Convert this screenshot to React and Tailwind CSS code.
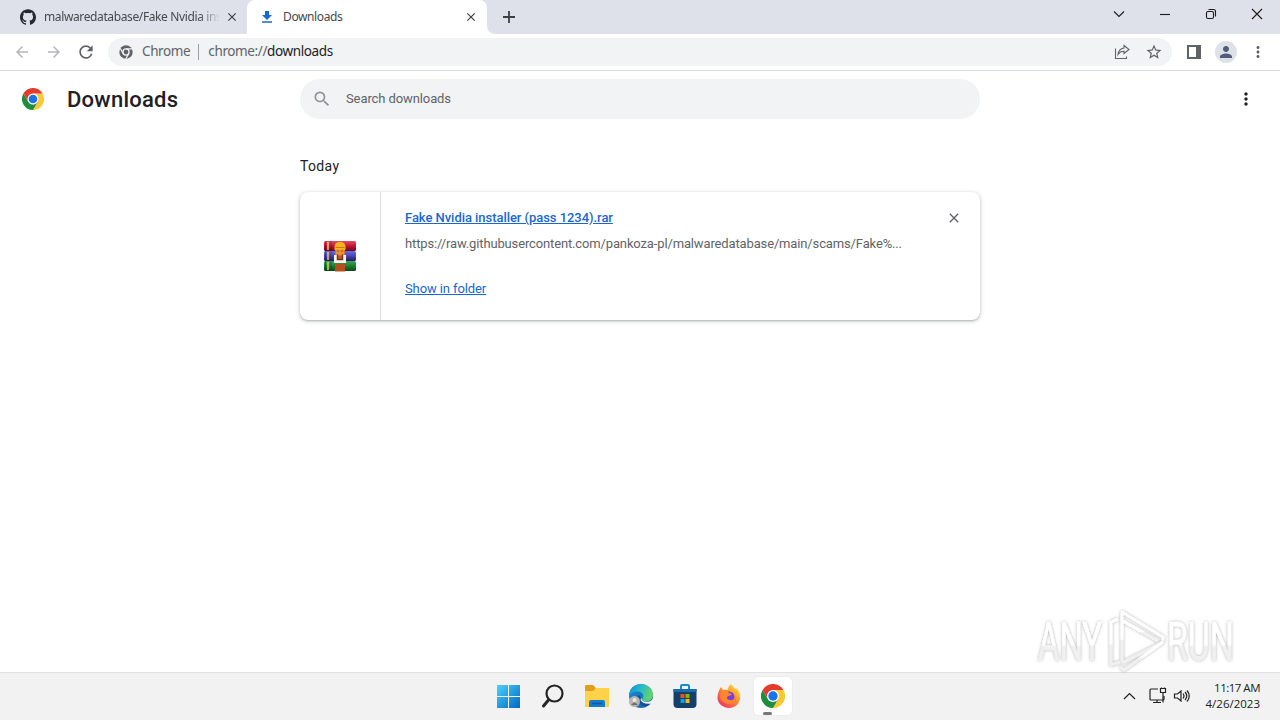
import { useState } from "react";
import { SiGithub } from "react-icons/si";
import { MdArrowBack, MdArrowForward, MdRefresh, MdSearch, MdMoreVert, MdClose, MdStarBorder, MdPerson } from "react-icons/md";

const item = {
  name: "Fake Nvidia installer (pass 1234).rar",
  url: "https://raw.githubusercontent.com/pankoza-pl/malwaredatabase/main/scams/Fake%...",
};

function ChromeLogo({ size }) {
  return (
    <svg width={size} height={size} viewBox="0 0 48 48" className="shrink-0">
      <path d="M44.8 12A24 24 0 0 1 24 48L34.4 30 24 12Z" fill="#fcc934" />
      <path d="M24 48A24 24 0 0 1 3.2 12L13.6 30 24 36 34.4 30Z" fill="#1e8e3e" />
      <path d="M3.2 12 13.6 30 24 24 24 12H44.8A24 24 0 0 0 3.2 12Z" fill="#e33b2e" />
      <circle cx="24" cy="24" r="12" fill="#fff" />
      <circle cx="24" cy="24" r="9.4" fill="#1a73e8" />
    </svg>
  );
}

function ChromeMono() {
  return (
    <svg width="14" height="14" viewBox="0 0 48 48" className="shrink-0">
      <circle cx="24" cy="24" r="23" fill="#5f6368" />
      <circle cx="24" cy="24" r="10.5" fill="#5f6368" stroke="#f1f3f4" strokeWidth="4.5" />
      <path d="M24 13H46M14.5 29.5 4 11M33.5 29.5 23 48" stroke="#f1f3f4" strokeWidth="4" />
    </svg>
  );
}

function DownloadIcon() {
  return (
    <svg width="16" height="16" viewBox="0 0 16 16" className="shrink-0">
      <path d="M6 2h4v4h3L8 11 3 6h3zM3 12.3h10v1.5H3z" fill="#1967d2" />
    </svg>
  );
}

function WinrarIcon() {
  return (
    <svg width="34" height="32" viewBox="0 0 34 32">
      <defs>
        <linearGradient id="rred" x2="0" y2="1"><stop stopColor="#e24f63" /><stop offset=".5" stopColor="#c31635" /><stop offset="1" stopColor="#670718" /></linearGradient>
        <linearGradient id="rblue" x2="0" y2="1"><stop stopColor="#6670dc" /><stop offset=".5" stopColor="#4a42b5" /><stop offset="1" stopColor="#211b62" /></linearGradient>
        <linearGradient id="rgreen" x2="0" y2="1"><stop stopColor="#42a557" /><stop offset=".5" stopColor="#16802f" /><stop offset="1" stopColor="#07491a" /></linearGradient>
      </defs>
      <rect x="1" y="1" width="32" height="10" rx="1.5" fill="url(#rred)" />
      <rect x="1" y="11" width="32" height="10" rx="1.5" fill="url(#rblue)" />
      <rect x="1" y="21" width="32" height="10" rx="1.5" fill="url(#rgreen)" />
      <path d="M5 2v8M5 12v8M5 22v8" stroke="#ecc85b" strokeWidth="1.5" />
      <path d="M2.5 1v30M8 1v30" stroke="#2b1830" strokeWidth=".7" opacity=".6" />
      <rect x="12" y="8" width="10" height="15" fill="#c55a23" />
      <path d="M11.500 10V7q0-5 5.500-5t5.500 5v3z" fill="#f7b51b" />
      <path d="M12.500 7.500h9" stroke="#c77915" />
      <path d="M12.500 9.500h9v6h-9z" fill="#e8903a" />
      <path d="M14 11h2M18 11h2" stroke="#a04b1d" />
      <path d="M11 15h3v5h6v-5h3v8H11z" fill="#f8f5ee" />
      <path d="M14.500 14.500v5h5v-5" fill="none" stroke="#763612" strokeWidth="1.5" />
      <path d="M12 24h10v7.500H12z" fill="#b94e1e" />
    </svg>
  );
}

function TabStrip() {
  return (
    <div className="flex h-[34px] bg-[#dee1e9]">
      <div className="flex w-[247px] items-center pr-2 pl-5 font-['Noto_Sans',sans-serif] text-xs text-[#45494d]">
        <SiGithub size={16} className="shrink-0 text-[#24292f]" />
        <span className="ml-2 w-[176px] mask-r-from-88% whitespace-nowrap tracking-[-0.38px]">
          malwaredatabase/Fake Nvidia ins
        </span>
        <MdClose size={14} className="ml-[5px] shrink-0 text-[#3c4043]" />
      </div>
      <div className="flex w-[240px] items-center rounded-t-lg bg-white pr-[9px] pl-3 font-['Noto_Sans',sans-serif] text-xs text-[#45494d]">
        <DownloadIcon />
        <span className="ml-2 flex-1 tracking-[-0.38px]">Downloads</span>
        <MdClose size={14} className="text-[#3c4043]" />
      </div>
      <svg width="44" height="34" viewBox="0 0 44 34">
        <path d="M0 26a8 8 0 0 0 8 8H0z" fill="#fff" />
        <path d="M22 11v12M16 17h12" stroke="#3c4043" strokeWidth="1.8" />
      </svg>
      <svg width="184" height="34" viewBox="0 0 184 34" className="ml-auto" fill="none" stroke="#1b1b1b" strokeWidth="1.1">
        <path d="m18 11.5 5 5 5-5" />
        <path d="M64 14.5h10" />
        <rect x="110.5" y="11.5" width="7" height="7" rx="1.5" />
        <path d="M112.5 9.5h5q2 0 2 2v5" />
        <path d="m156 9 10 10M166 9l-10 10" />
      </svg>
    </div>
  );
}

function Toolbar() {
  return (
    <div className="flex h-[37px] items-center border-b border-[#dadce0] bg-white pb-px pl-[13px] text-[#5f6368]">
      <MdArrowBack size={18} className="text-[#b4b6b9]" />
      <MdArrowForward size={18} className="ml-[14px] text-[#b4b6b9]" />
      <MdRefresh size={20} className="ml-[13px]" />
      <div className="ml-3 flex h-7 w-[1064px] items-center rounded-full bg-[#f1f3f4] pl-[11px] font-['Noto_Sans',sans-serif] text-[13.5px] tracking-[-0.38px]">
        <ChromeMono />
        <span className="ml-[9px]">Chrome</span>
        <span className="mr-[9px] ml-2 h-4 w-px bg-[#9aa0a6]" />
        <span>chrome://<span className="text-[#202124]">downloads</span></span>
        <svg width="16" height="16" viewBox="0 0 16 16" className="mr-[15px] ml-auto" fill="none" stroke="#5f6368" strokeWidth="1.1">
          <path d="M1.500 4.500v10h11v-2M10 1.500l5 4-5 4V7.300Q6.500 7 4 10.500q.500-5.500 6-6.500z" />
        </svg>
        <MdStarBorder size={18} className="mr-[9px]" />
      </div>
      <svg width="14" height="14" viewBox="0 0 14 14" className="ml-[15px]">
        <path d="M0 0h14v14H0zM2 2v10h7V2z" fill="#5f6368" fillRule="evenodd" />
      </svg>
      <span className="ml-[14px] flex size-[22px] items-center justify-center rounded-full bg-[#dee1e6] text-[#505c78]">
        <MdPerson size={18} />
      </span>
      <MdMoreVert size={18} className="ml-3" />
    </div>
  );
}

function DownloadCard({ onRemove }) {
  return (
    <div className="mt-[17px] flex h-32 rounded-lg bg-white shadow-[0_1px_2px_rgba(60,64,67,0.3),0_1px_4px_1px_rgba(60,64,67,0.15)]">
      <div className="flex w-[81px] items-center justify-center border-r border-[#dadce0]">
        <WinrarIcon />
      </div>
      <div className="flex flex-1 flex-col items-start pt-4 pl-6 leading-5">
        <a href="#file" className="font-medium tracking-[-0.05px] text-[#1967d2] underline">{item.name}</a>
        <span className="mt-1.5 tracking-[-0.14px] whitespace-nowrap text-[#5f6368]">{item.url}</span>
        <a href="#folder" className="mt-[25px] tracking-[-0.1px] text-[#1967d2] underline">Show in folder</a>
      </div>
      <button onClick={onRemove} className="mt-[18px] mr-[18px] size-4 text-[#5f6368]">
        <MdClose size={16} />
      </button>
    </div>
  );
}

function Watermark() {
  return (
    <svg width="220" height="74" viewBox="0 0 220 74" className="pointer-events-none absolute top-[606px] left-[1034px]">
      <defs>
        <linearGradient id="wm" x2="0" y2="1"><stop offset=".54" stopColor="#ffffff" /><stop offset=".58" stopColor="#f0f0f0" /></linearGradient>
        <filter id="wms" x="-10%" y="-20%" width="120%" height="140%"><feDropShadow dx="0" dy="0" stdDeviation="1.5" floodColor="#777777" floodOpacity=".6" /></filter>
      </defs>
      <g filter="url(#wms)" fill="url(#wm)">
        <g fontFamily="Roboto, sans-serif" fontSize="53" stroke="url(#wm)" strokeWidth=".6">
          <text x="4" y="54" textLength="64" lengthAdjust="spacingAndGlyphs">ANY</text>
          <text x="133" y="54" textLength="67" lengthAdjust="spacingAndGlyphs">RUN</text>
        </g>
        <g fill="none" stroke="url(#wm)" strokeWidth="3.2" strokeLinejoin="round">
          <path d="M88 6 129 31v5L90 56h-2z" />
          <path d="m89 15 35 20" />
          <path d="m84 13-7 3v43l9-3" />
          <path d="M129 36 90 64l-4-3" />
        </g>
      </g>
    </svg>
  );
}

function Taskbar() {
  return (
    <div className="flex h-12 items-center border-t border-[#e1e1e1] bg-[#f2f2f2] pb-px">
      <div className="ml-[496px] flex items-center gap-[18px]">
        <svg width="25" height="26" viewBox="0 0 25 26">
          <defs><linearGradient id="win" x2="1" y2="1"><stop stopColor="#4fd0fb" /><stop offset="1" stopColor="#0067c0" /></linearGradient></defs>
          <path d="M1 2h11v11H1zM13 2h11v11H13zM1 14h11v11H1zM13 14h11v11H13z" fill="url(#win)" />
        </svg>
        <svg width="28" height="26" viewBox="0 0 28 26" fill="none" stroke="#242424" strokeLinecap="round">
          <circle cx="15.500" cy="10.500" r="8" strokeWidth="2.200" />
          <path d="m9.500 17-5 6" strokeWidth="3" />
        </svg>
        <svg width="26" height="26" viewBox="0 0 26 26" className="-ml-px">
          <path d="M1 3q0-1 1-1h7l3 3h12q1 0 1 1v16q0 2-2 2H3q-2 0-2-2z" fill="#dfa017" />
          <path d="M1 8h8l3-3h12q1 0 1 1v16q0 2-2 2H3q-2 0-2-2z" fill="#ffd24a" />
          <path d="M5 24v-5q0-2 2-2h12q2 0 2 2v5z" fill="#1779ca" />
          <path d="M8 20.500h10" stroke="#0c56a3" strokeWidth="1.500" />
        </svg>
        <svg width="26" height="26" viewBox="0 0 26 26">
          <defs>
            <linearGradient id="edg" x2="1" y2=".3"><stop stopColor="#1489d2" /><stop offset=".5" stopColor="#26b8cf" /><stop offset="1" stopColor="#62d36c" /></linearGradient>
            <linearGradient id="edb" x2="1" y2="1"><stop stopColor="#178bd1" /><stop offset="1" stopColor="#1464ac" /></linearGradient>
          </defs>
          <circle cx="13" cy="13" r="12" fill="url(#edb)" />
          <path d="M1 13C1 6 6 1 13 1s12 5 12 11c0 4-3 6.500-7 6.500-3 0-5-1-3.500-3 2-3 0-7-5-7-4 0-7 2-8.500 4.500z" fill="url(#edg)" />
          <path d="M10 12q-3 8 5 11 5 1 8-3-9 2-10-4 0-3-3-4z" fill="#144f9a" />
          <path d="M13.500 14q-1 4.500 5 5 4 0 6.500-3l1 3-2.500 1.500q-9 1-11-3.500z" fill="#f2f2f2" />
          <circle cx="6.500" cy="18.500" r="5.500" fill="#b8b4ad" />
          <circle cx="6.500" cy="17" r="2" fill="#ede8df" />
          <path d="M3 22q3.500-5 7 0" fill="#716e69" />
        </svg>
        <svg width="26" height="26" viewBox="0 0 26 26">
          <path d="M9 7V3q0-1 1-1h6q1 0 1 1v4" fill="none" stroke="#168bd0" strokeWidth="2" />
          <path d="M1.500 6h23v15q0 4-4 4h-15q-4 0-4-4z" fill="#153f6b" />
          <path d="M1.500 6h23v3h-23z" fill="#1b6ca6" />
          <path d="M8.500 11h4v4h-4z" fill="#f25022" /><path d="M13.500 11h4v4h-4z" fill="#7fba00" />
          <path d="M8.500 16h4v4h-4z" fill="#00a4ef" /><path d="M13.500 16h4v4h-4z" fill="#ffb900" />
        </svg>
        <svg width="26" height="26" viewBox="0 0 26 26">
          <defs><linearGradient id="ff" x1="1" x2=".2" y2="1"><stop stopColor="#fff044" /><stop offset=".45" stopColor="#ff9a28" /><stop offset="1" stopColor="#f02c69" /></linearGradient></defs>
          <path d="M15 1q2 2 4 5l1-1q5 4 4 11c-1 6-6 9-11 9S1 21 1.500 14C1.700 10 3 7 5 4l2 3q3-1 5 0 0-4 3-6z" fill="url(#ff)" />
          <circle cx="13" cy="14" r="5.500" fill="#7a3ddb" />
          <path d="M6 8q5-2 7 2l3 1q-1 2-4 2-3 3 2 4 5 1 5-5 3 9-6 9-9-1-9-9z" fill="#ff8530" />
        </svg>
        <div className="-mx-[6px] flex h-[38px] w-[38px] flex-col items-center rounded bg-white pt-[7px] shadow-[0_0_1px_rgba(0,0,0,0.2)]">
          <ChromeLogo size={24} />
          <span className="mt-1 mr-[11px] h-[3px] w-[9px] rounded-full bg-[#777777]" />
        </div>
      </div>
      <svg width="70" height="24" viewBox="0 0 70 24" className="ml-auto" fill="none" stroke="#202020" strokeWidth="1.200">
        <path d="m3 15 5.500-5.500L14 15" />
        <path d="M37 5h-7q-1 0-1 1v9q0 1 1 1h12q1 0 1-1v-3M32 18.500h8M36 16v2.500" />
        <path d="M39.500 4.500h5v4h-5zM42 8.500v10M40.500 3.500v1M43.500 3.500v1" />
        <path d="M53.500 10v4h3l3.500 3V7l-3.500 3zM62 9.500q2 2.500 0 5M64 8q3.500 4 0 8M66 6.500q4.500 5.500 0 11" />
      </svg>
      <div className="mr-5 ml-[11px] w-[58px] text-right font-['Open_Sans',sans-serif] text-[11.500px] leading-4 whitespace-nowrap text-[#202020]">
        <div className="tracking-[-0.500px]">11:17 AM</div>
        <div>4/26/2023</div>
      </div>
    </div>
  );
}

export default function App() {
  const [items, setItems] = useState([item]);

  return (
    <div className="relative flex h-[720px] w-[1280px] flex-col overflow-hidden bg-white font-[Roboto,sans-serif] text-[13px]">
      <TabStrip />
      <Toolbar />
      <header className="flex h-14 items-center pr-6 pl-[22px]">
        <ChromeLogo size={22} />
        <h1 className="ml-[23px] w-[233px] text-[22px] font-medium tracking-[0.25px] text-[#202124]">Downloads</h1>
        <label className="flex h-10 w-[680px] items-center rounded-full bg-[#f1f3f4] pl-3">
          <MdSearch size={20} className="text-[#8f9499]" />
          <input
            placeholder="Search downloads"
            className="ml-[14px] flex-1 bg-transparent tracking-[-0.1px] outline-none placeholder:text-[#5f6368]"
          />
        </label>
        <MdMoreVert size={20} className="ml-auto text-[#202124]" />
      </header>
      <main className="ml-[300px] w-[680px] flex-1 pt-[30px]">
        <h2 className="text-sm leading-[18px] tracking-[0.35px] text-[#202124]">Today</h2>
        {items.map((d) => (
          <DownloadCard key={d.name} onRemove={() => setItems([])} />
        ))}
      </main>
      <Taskbar />
      <Watermark />
    </div>
  );
}
